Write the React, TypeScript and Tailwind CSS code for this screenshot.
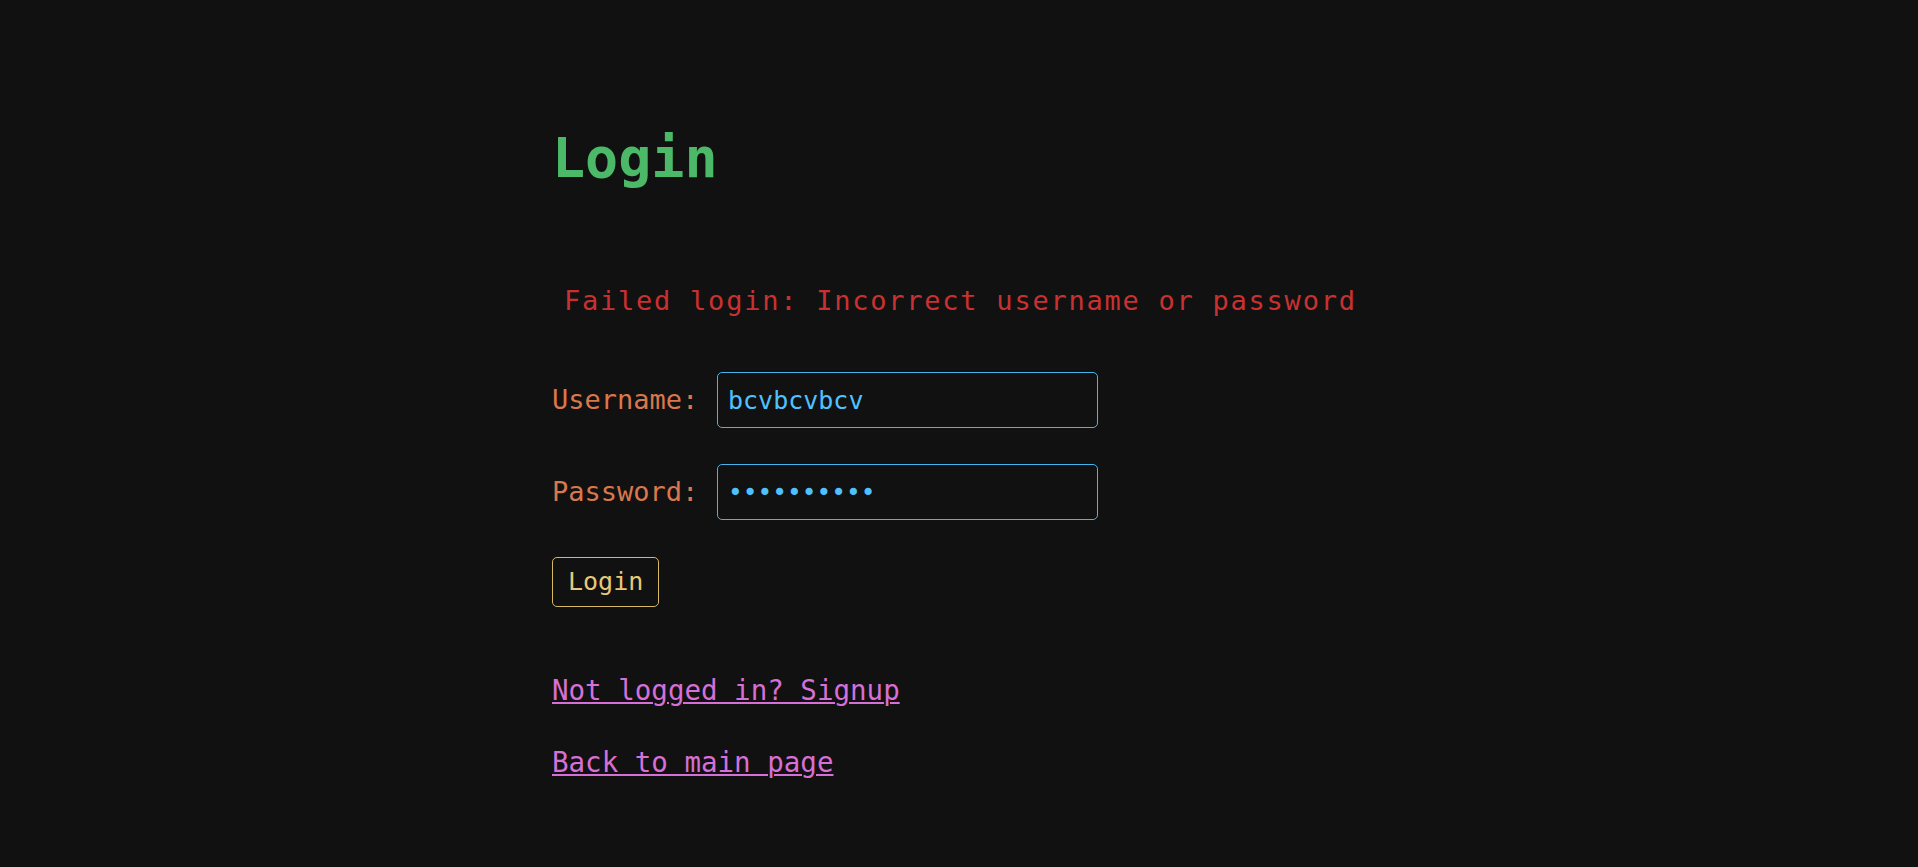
import { useState } from 'react'

const mono = 'font-["DejaVu_Sans_Mono","Liberation_Mono",monospace]'

export default function App() {
  const [username, setUsername] = useState('bcvbcvbcv')
  const [password, setPassword] = useState('bcvbcvbcvb')

  return (
    <div className={`min-h-screen bg-[#111111] ${mono}`}>
      <div className="mx-auto flex w-[814px] flex-col items-start pt-[126px]">
        <h1 className="text-[55px] leading-[64px] font-bold text-[#4cb968]">Login</h1>

        <p className="mt-[95px] pl-3 text-[27px] leading-[32px] tracking-[1.76px] text-[#c93131]">
          Failed login: Incorrect username or password
        </p>

        <form className="flex flex-col items-start" onSubmit={e => e.preventDefault()}>
          <div className="mt-[55px] flex items-center">
            <label htmlFor="username" className="w-[165px] text-[27px] text-[#d9784c]">Username:</label>
            <input
              id="username"
              value={username}
              onChange={e => setUsername(e.target.value)}
              className="h-[56px] w-[381px] rounded-[5px] border border-[#45b3ec] bg-transparent px-[10px] text-[25px] text-[#4fc1ff] outline-none"
            />
          </div>

          <div className="mt-[36px] flex items-center">
            <label htmlFor="password" className="w-[165px] text-[27px] text-[#d9784c]">Password:</label>
            <input
              id="password"
              type="password"
              value={password}
              onChange={e => setPassword(e.target.value)}
              className="h-[56px] w-[381px] rounded-[5px] border border-[#45b3ec] bg-transparent px-[10px] text-[24.5px] text-[#4fc1ff] outline-none"
            />
          </div>

          <button
            type="submit"
            className="mt-[37px] h-[50px] rounded-[5px] border border-[#d6b863] px-[15px] text-[25px] leading-[30px] text-[#e6c97b]"
          >
            Login
          </button>
        </form>

        <a href="#" className="mt-[67px] text-[27.5px] leading-[32px] text-[#d670d6] underline decoration-2 underline-offset-[2px]">
          Not logged in? Signup
        </a>
        <a href="#" className="mt-[40px] text-[27.5px] leading-[32px] text-[#d670d6] underline decoration-2 underline-offset-[2px]">
          Back to main page
        </a>
      </div>
    </div>
  )
}
